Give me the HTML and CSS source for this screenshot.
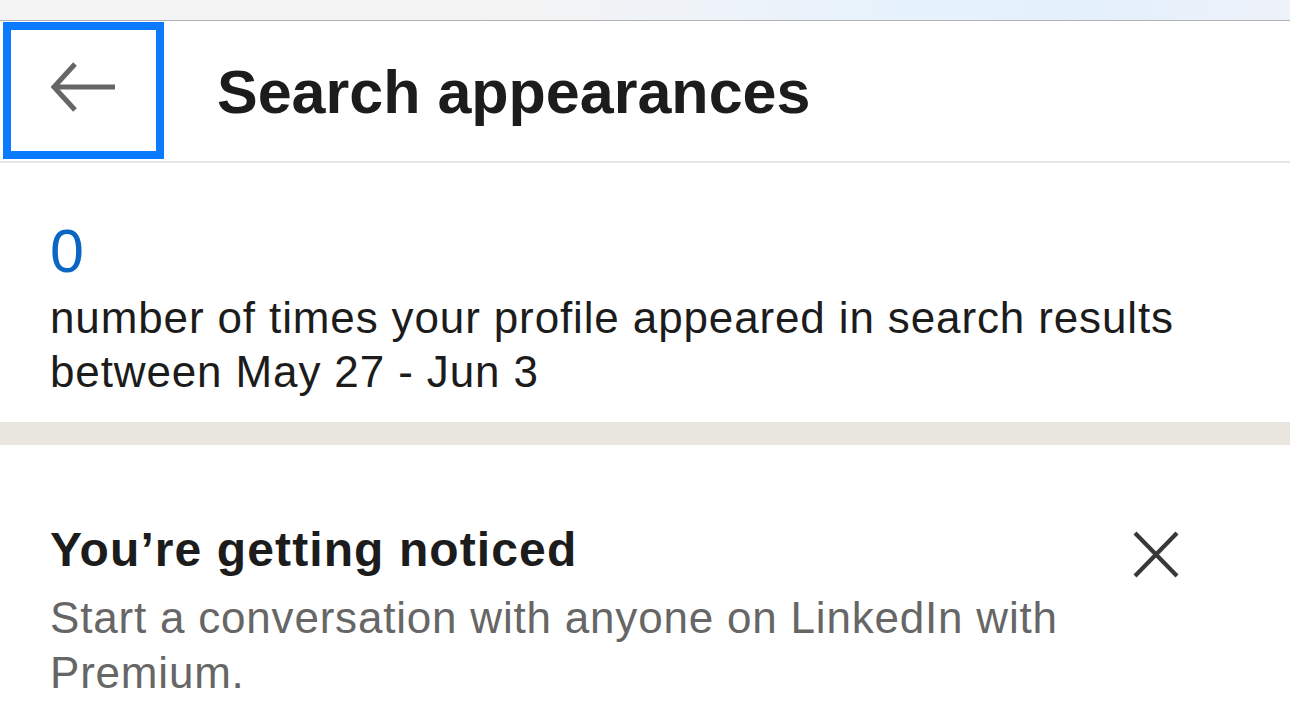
FILE: index.html
```html
<!DOCTYPE html>
<html lang="en">
<head>
<meta charset="utf-8">
<title>Search appearances</title>
<link rel="stylesheet" href="styles.css">
</head>
<body>
  <div class="topstrip"></div>
  <header class="header">
    <button class="back" aria-label="Back">
      <svg class="back-icon" width="66" height="52" viewBox="0 0 66 52">
        <polyline points="24,3 3,26 24,49" fill="none" stroke="#666666" stroke-width="5" stroke-linejoin="miter"/>
        <line x1="3" y1="26" x2="64" y2="26" stroke="#666666" stroke-width="5"/>
      </svg>
    </button>
    <h1 class="title">Search appearances</h1>
  </header>

  <section class="stats">
    <div class="count">0</div>
    <p class="desc">number of times your profile appeared in search results between May 27 - Jun 3</p>
  </section>

  <div class="divider"></div>

  <section class="promo">
    <div class="promo-text">
      <h2 class="promo-title">You’re getting noticed</h2>
      <p class="promo-desc">Start a conversation with anyone on LinkedIn with Premium.</p>
    </div>
    <button class="close" aria-label="Dismiss">
      <svg width="50" height="51" viewBox="0 0 50 51">
        <line x1="4" y1="4" x2="46" y2="47" stroke="#383838" stroke-width="4.2"/>
        <line x1="46" y1="4" x2="4" y2="47" stroke="#383838" stroke-width="4.2"/>
      </svg>
    </button>
  </section>
</body>
</html>
```

FILE: styles.css
```css
* {
  box-sizing: border-box;
}

html, body {
  margin: 0;
  padding: 0;
  background: #ffffff;
  font-family: "Liberation Sans", Arial, "Helvetica Neue", sans-serif;
  overflow: hidden;
}

.topstrip {
  height: 21px;
  border-bottom: 1px solid #b2b2b2;
  background: linear-gradient(90deg, #f4f4f4 0%, #f3f3f3 40%, #eef3f9 55%, #e6f2fc 70%, #e4f0fc 85%, #eef2f9 100%);
}

.header {
  display: flex;
  align-items: center;
  height: 142px;
  border-bottom: 2px solid #e6e6e6;
}

.back {
  display: flex;
  align-items: center;
  justify-content: center;
  width: 161px;
  height: 137px;
  margin-left: 3px;
  margin-top: -1px;
  padding: 0 0 8px 0;
  border: 8px solid #0a7bff;
  background: #ffffff;
}

.back-icon {
  display: block;
}

.title {
  margin: 2px 0 0 53px;
  font-size: 61px;
  font-weight: 700;
  line-height: normal;
  color: #1c1c1c;
}

.stats {
  padding: 48px 50px 23px 50px;
}

.count {
  font-size: 61px;
  line-height: 80px;
  color: #0a66c2;
}

.desc {
  margin: 0;
  font-size: 44px;
  letter-spacing: 0.87px;
  line-height: 54px;
  color: #1c1c1c;
}

.divider {
  height: 23px;
  background: #e9e5df;
}

.promo {
  display: flex;
  align-items: flex-start;
  padding: 75px 109px 0 50px;
}

.promo-text {
  flex: 1;
}

.promo-title {
  margin: 0 0 10px 0;
  font-size: 48px;
  font-weight: 700;
  letter-spacing: 1.1px;
  line-height: 60px;
  color: #1c1c1c;
}

.promo-desc {
  margin: 0;
  font-size: 44px;
  letter-spacing: 0.8px;
  line-height: 55px;
  color: #666666;
}

.close {
  display: block;
  margin-top: 9px;
  padding: 0;
  border: 0;
  background: transparent;
}

.close svg {
  display: block;
}
```
